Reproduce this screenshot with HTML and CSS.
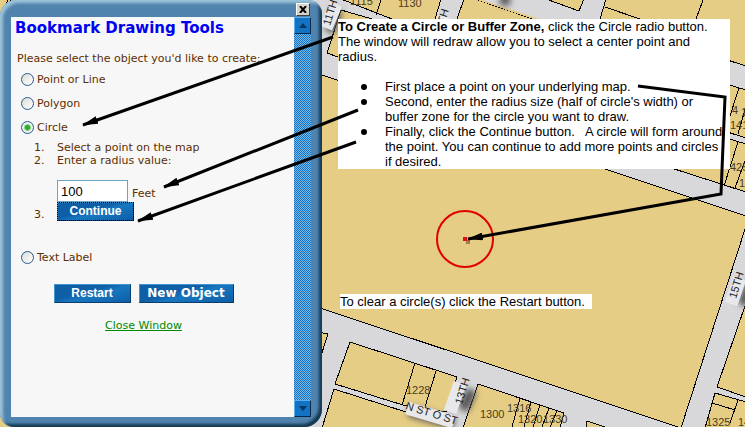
FILE: index.html
```html
<!DOCTYPE html>
<html lang="en">
<head>
<meta charset="utf-8">
<title>Bookmark Drawing Tools</title>
<link rel="stylesheet" href="styles.css">
</head>
<body>
<svg class="map" width="745" height="427" viewBox="0 0 745 427" aria-hidden="true">
  <defs>
    <filter id="soft" x="-50%" y="-50%" width="200%" height="200%"><feGaussianBlur stdDeviation="3"/></filter>
  </defs>
  <rect class="street" width="745" height="427"/>
  <g class="lot">
    <path d="M-2 -2H12L-2 26Z"/>
    <path d="M341 10L400 27V80L327 53Z"/>
    <path d="M341 -1L392 19H435L441 -1Z"/>
    <path d="M464 -1H475L533 19L560 28H455L457 19Z"/>
    <path d="M475 -1L533 19H540L479 -1Z" class="street"/>
    <path d="M546 -1L579 11L584 -1Z"/>
    <path d="M606 -1H746V66L600 19Z"/>
    <path d="M322 75L746 216V226L681 428L540 381L320 308V75Z"/>
    <path d="M700 76L746 90V138L690 120Z"/>
    <path d="M690 127L746 144V192L640 158Z"/>
    <path d="M318 332L328 334L318 365Z"/>
    <path d="M350 342L457 377L446 412L403 405L335 384Z"/>
    <path d="M334 389L456 428H322Z"/>
    <path d="M478 384L564 413L560 428H463Z"/>
    <path d="M586 428L587 421L608 428Z"/>
    <path d="M746 303L717 387L746 397Z"/>
    <path d="M715 393L746 402V428H705Z"/>
    <path d="M-2 405L18 428H-2Z"/>
  </g>
  <g class="boundary">
    <path d="M381 0L376 15M605 7L640 19M703 0L696 19"/>
    <path d="M739 88L728 122M746 106L738 134M738 142L724 186M746 158L735 188"/>
    <path d="M415 363L402 405M436 371L425 407"/>
    <path d="M520 398L512 427M531 402L524 427M540 405L533 427M549 408L542 427M557 411L550 427"/>
    <path d="M712 403L735 410M738 400L730 423M0 17L8 0M4 22L18 0"/>
  </g>
  <g class="halo" filter="url(#soft)">
    <path d="M337 10L330 32M472 390L463 410M409 411L454 424M743 305L751 282M500 0H510"/>
  </g>
  <g class="label-back">
    <path d="M336 4L326 28M460 383L450 412M407 408L454 422M740 278L731 304M444 16L441 24"/>
  </g>
  <g class="number">
    <text x="350" y="5">1115</text>
    <text x="398" y="7">1130</text>
    <text x="406" y="394">1228</text>
    <text x="480" y="418">1300</text>
    <text x="507" y="412">1316</text>
    <text x="518" y="423">1320</text>
    <text x="543" y="423">1330</text>
    <text x="706" y="426">1325</text>
    <text x="738" y="426">14</text>
    <text x="732" y="114">4</text>
    <text x="741" y="116">1</text>
    <text x="730" y="129">141</text>
    <text x="730" y="171">425</text>
    <text x="739" y="187">14</text>
  </g>
  <g class="road-name">
    <text transform="translate(330 26) rotate(-73)">11TH</text>
    <text transform="translate(441 36) rotate(-73)">12TH</text>
    <text transform="translate(462 405) rotate(-73)">13TH</text>
    <text transform="translate(736 299) rotate(-73)">15TH</text>
    <text transform="translate(405 409) rotate(17)">N ST O ST</text>
  </g>
  <circle class="buffer" cx="465" cy="239" r="28"/>
  <rect class="shade" x="466" y="240" width="4" height="4"/>
  <rect class="center" x="463" y="237" width="4" height="4"/>
</svg>

<main class="page">
  <section class="dialog" aria-label="Bookmark Drawing Tools">
    <header class="bar"><button class="close" type="button" aria-label="Close">
      <svg width="8" height="7" viewBox="0 0 8 7"><path d="M1 0L7 7M7 0L1 7"/></svg>
    </button></header>
    <div class="body">
      <form class="tools">
        <h1>Bookmark Drawing Tools</h1>
        <p class="prompt">Please select the object you'd like to create:</p>
        <label class="choice"><input type="radio" name="shape"><span>Point or Line</span></label>
        <label class="choice"><input type="radio" name="shape"><span>Polygon</span></label>
        <label class="choice"><input type="radio" name="shape" checked><span>Circle</span></label>
        <ol class="steps">
          <li>Select a point on the map</li>
          <li><div><label for="radius">Enter a radius value:</label>
            <div class="radius"><input id="radius" type="text" value="100"><span>Feet</span></div></div></li>
          <li class="submit"><button class="action focused" type="button">Continue</button></li>
        </ol>
        <label class="choice"><input type="radio" name="shape"><span>Text Label</span></label>
        <div class="actions">
          <button class="action" type="button">Restart</button>
          <button class="action wide" type="button">New Object</button>
        </div>
        <p class="dismiss"><a href="#">Close Window</a></p>
      </form>
      <div class="scroll">
        <button type="button" aria-label="Scroll up"><svg width="8" height="5" viewBox="0 0 8 5"><path d="M0 5L4 0L8 5Z"/></svg></button>
        <button type="button" aria-label="Scroll down"><svg width="8" height="5" viewBox="0 0 8 5"><path d="M0 0H8L4 5Z"/></svg></button>
      </div>
    </div>
  </section>
  <section class="notes">
    <div class="note">
      <p><b>To Create a Circle or Buffer Zone,</b> click the Circle radio button.<br>The window will redraw allow you to select a center point and<br>radius.</p>
      <ul>
        <li>First place a point on your underlying map.</li>
        <li>Second, enter the radius size (half of circle's width) or<br>buffer zone for the circle you want to draw.</li>
        <li>Finally, click the Continue button. &nbsp; A circle will form around<br>the point. You can continue to add more points and circles<br>if desired.</li>
      </ul>
    </div>
    <p class="note clear">To clear a circle(s) click the Restart button.</p>
  </section>
</main>

<svg class="arrows" width="745" height="427" viewBox="0 0 745 427" aria-hidden="true">
  <defs>
    <marker id="head" markerUnits="userSpaceOnUse" markerWidth="16" markerHeight="8" refX="15" refY="4" orient="auto"><path d="M0 0L16 4L0 8Z"/></marker>
  </defs>
  <path d="M333 37L83 125"/>
  <path d="M358 110L164 187"/>
  <path d="M356 142L138 221"/>
  <path d="M638 86L725 97L721 194L468 239"/>
</svg>
</body>
</html>
```
FILE: styles.css
```css
* { box-sizing: border-box; }

body {
  margin: 0;
  min-height: 100vh;
  position: relative;
  overflow: hidden;
  font-family: "Liberation Sans", Arial, sans-serif;
}

h1, p, ul, ol { margin: 0; padding: 0; }
button { padding: 0; font-family: inherit; }

/* Map backdrop */
.map, .arrows { position: absolute; top: 0; left: 0; }
.lot path { fill: #e6cd85; stroke: #000; stroke-width: 1; shape-rendering: crispEdges; }
.street { fill: #d8d8da; }
.lot .street { fill: #e6cd85; stroke: none; }
.boundary path { fill: none; stroke: #000; stroke-width: 1; shape-rendering: crispEdges; }
.number { font-size: 11px; fill: #4a3c1c; }
.road-name { font-size: 11px; fill: #222; }
.halo path { fill: none; stroke: #555; stroke-width: 11; }
.label-back path { fill: none; stroke: #e8e8ea; stroke-width: 13; }
.buffer { fill: none; stroke: #e00000; stroke-width: 2; }
.center { fill: #e01010; }
.shade { fill: #a87848; }

.page { position: relative; display: flex; min-height: 100vh; }

/* Dialog window */
.dialog {
  flex: 0 0 322px;
  min-width: 0;
  display: flex;
  flex-direction: column;
  padding: 0 11px 10px;
  border-radius: 16px 14px 18px 14px;
  background: #5083ae;
  box-shadow: inset 3px 3px 3px #9cc3d8, inset -3px -3px 3px #143852;
}
.bar { height: 17px; padding-top: 3px; display: flex; justify-content: flex-end; }
.close {
  width: 14px;
  height: 13px;
  margin-right: 1px;
  display: grid;
  place-items: center;
  background: #d6d3ca;
  border: 1px solid;
  border-color: #fff #404040 #404040 #fff;
}
.close path { stroke: #000; stroke-width: 2; }
.body { flex: 1; display: flex; background: #f7f7f7; }
.tools {
  flex: 1;
  min-width: 0;
  padding: 0 24px 0 6px;
  font: 11px/13px "DejaVu Sans", Verdana, sans-serif;
  color: #5c2e00;
}
h1 {
  margin: 1px 0 0 -2px;
  font-size: 15px;
  line-height: 20px;
  color: #0000f0;
  white-space: nowrap;
}
.prompt { padding: 14px 0 2px; white-space: nowrap; }
.choice { display: flex; align-items: center; gap: 3px; height: 24px; padding-left: 4px; }
.choice input {
  appearance: none;
  width: 13px;
  height: 13px;
  margin: 0;
  border: 1px solid #2a5a8c;
  border-radius: 50%;
  background: linear-gradient(135deg, #dcdcd4, #fff);
}
.choice input:checked { background: radial-gradient(circle, #2cac2c 0 2px, #eef4ee 4px); }
.choice span { padding-top: 1px; }

.steps { margin-bottom: 24px; padding: 2px 0 0 17px; list-style: none; counter-reset: step; }
.steps li { display: flex; counter-increment: step; }
.steps li::before { content: counter(step) "."; flex: 0 0 23px; }
.steps .submit { align-items: flex-end; }
.radius { display: flex; align-items: center; gap: 4px; margin-top: 13px; }
.radius input {
  width: 71px;
  height: 22px;
  padding: 0 3px;
  border: 1px solid #6fa3c4;
  background: #fff;
  font: 13px "Liberation Sans", Arial, sans-serif;
}
.radius span { padding-top: 4px; }

.action {
  width: 77px;
  height: 19px;
  border: 1px solid;
  border-color: #3f93cf #0a3d6c #0a3d6c #3f93cf;
  background: linear-gradient(165deg, #0f5fa6 40%, #1777c0 55%, #0d5ea6);
  color: #fff;
  font: bold 12px/15px "Liberation Sans", Arial, sans-serif;
}
.focused { outline: 1px dotted #000; outline-offset: -1px; }
.wide { width: 95px; font: bold 12px/15px "DejaVu Sans", Verdana, sans-serif; }
.actions { display: flex; justify-content: center; gap: 8px; margin-top: 15px; }
.dismiss { margin-top: 16px; text-align: center; }
.dismiss a { color: #008a00; }

.scroll {
  width: 17px;
  display: flex;
  flex-direction: column;
  justify-content: space-between;
  background: repeating-conic-gradient(#1273c4 0 25%, #7db9e6 0 50%) 0 0 / 2px 2px;
}
.scroll button {
  height: 17px;
  display: grid;
  place-items: center;
  border: 1px solid;
  border-color: #5bb0ec #06284a #06284a #5bb0ec;
  background: #1273c4;
}
.scroll path { fill: #06365f; }

/* Instructions over the map */
.notes { flex: 1; min-width: 0; padding: 19px 15px 0 16px; }
.note { background: #fff; font-size: 13px; line-height: 15px; color: #000; white-space: nowrap; }
.note ul { margin-top: 15px; padding-left: 47px; list-style: none; }
.note li { display: block; position: relative; }
.note li::before {
  content: "";
  position: absolute;
  left: -24px;
  top: 5px;
  width: 6px;
  height: 6px;
  border-radius: 50%;
  background: #000;
}
.clear { width: max-content; margin: 125px 0 0 2px; padding-right: 7px; }

.arrows { pointer-events: none; }
.arrows > path { fill: none; stroke: #000; stroke-width: 3; marker-end: url(#head); }
```
